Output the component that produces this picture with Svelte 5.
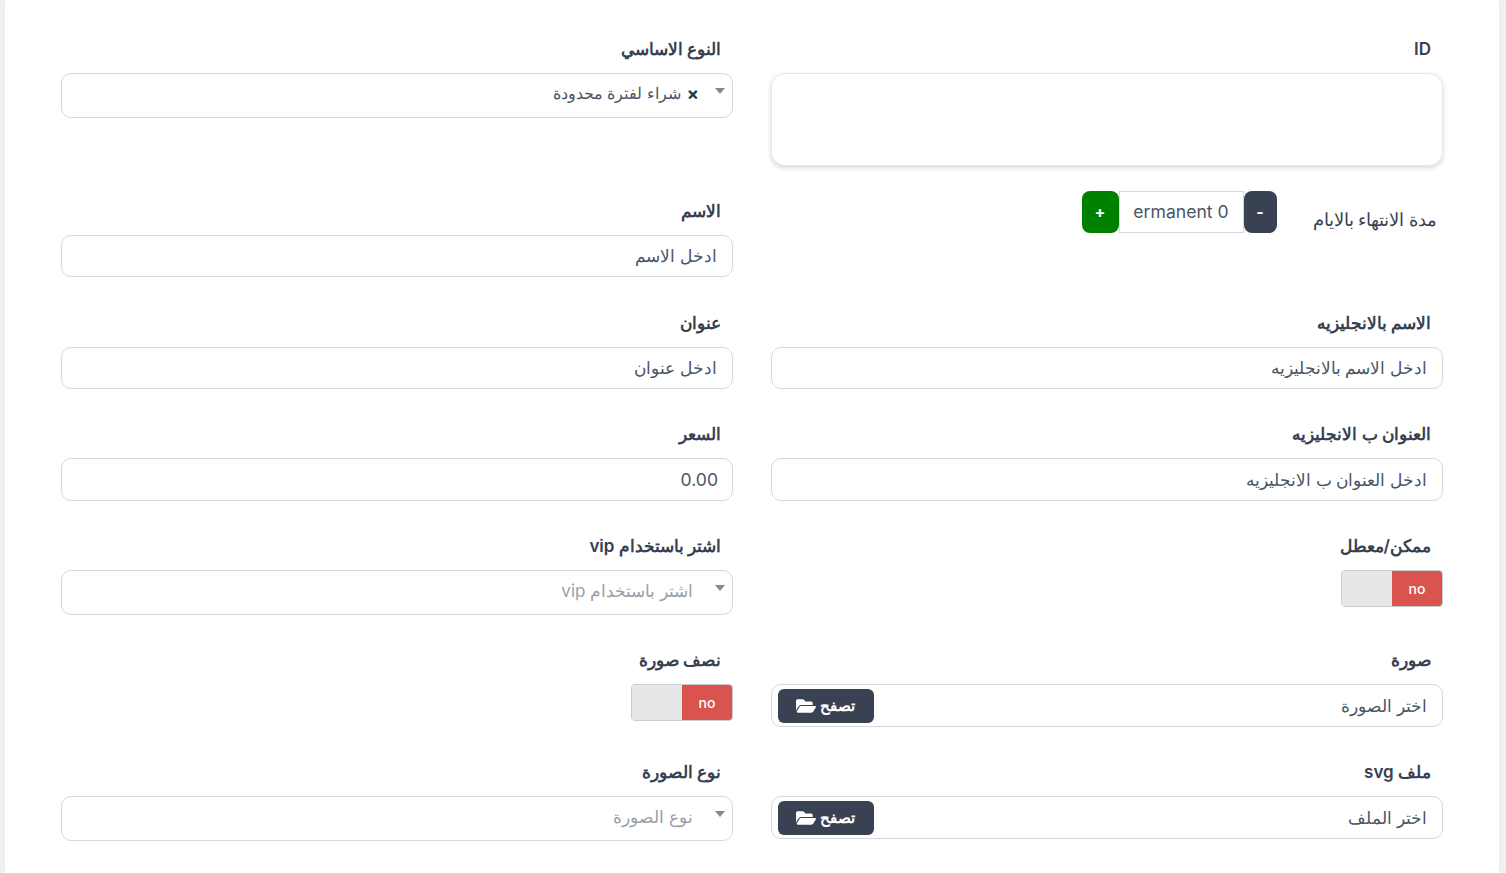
<script>
  const folder = 'M572.694 292.093L500.27 416.248A63.997 63.997 0 0 1 444.989 448H45.025c-18.523 0-30.064-20.093-20.731-36.093l72.424-124.155A64 64 0 0 1 152 256h399.964c18.523 0 30.064 20.093 20.73 36.093zM152 224h328v-48c0-26.51-21.49-48-48-48H272l-64-64H48C21.49 64 0 85.49 0 112v278.046l69.077-118.418C86.214 242.25 117.989 224 152 224z'
</script>

{#snippet browse(placeholder)}
  <div class="file-box">
    <span class="file-name">{placeholder}</span>
    <button type="button" class="browse">
      تصفح
      <svg viewBox="0 0 576 512" width="20" height="18" aria-hidden="true"><path d={folder} fill="currentColor" /></svg>
    </button>
  </div>
{/snippet}

{#snippet toggle()}
  <div class="toggle">
    <span class="toggle-no">no</span>
    <span class="toggle-off"></span>
  </div>
{/snippet}

{#snippet select(text, clearable)}
  <div class="select">
    <span class="arrow"></span>
    {#if clearable}
      <span class="clear">×</span>
      <span class="select-value">{text}</span>
    {:else}
      <span class="select-hint">{text}</span>
    {/if}
  </div>
{/snippet}

<div class="card">
  <form class="form">
    <div class="field first">
      <label for="id">ID</label>
      <textarea id="id" class="area"></textarea>
    </div>
    <div class="field first">
      <span class="label">النوع الاساسي</span>
      {@render select('شراء لفترة محدودة', true)}
    </div>

    <div class="field expire">
      <span class="expire-label">مدة الانتهاء بالايام</span>
      <div class="stepper">
        <button type="button" class="step minus">-</button>
        <span class="step-value">ermanent 0</span>
        <button type="button" class="step plus">+</button>
      </div>
    </div>
    <div class="field shifted">
      <label for="name">الاسم</label>
      <input id="name" class="input" placeholder="ادخل الاسم" />
    </div>

    <div class="field">
      <label for="name-en">الاسم بالانجليزيه</label>
      <input id="name-en" class="input" placeholder="ادخل الاسم بالانجليزيه" />
    </div>
    <div class="field">
      <label for="title">عنوان</label>
      <input id="title" class="input" placeholder="ادخل عنوان" />
    </div>

    <div class="field">
      <label for="title-en">العنوان ب الانجليزيه</label>
      <input id="title-en" class="input tall" placeholder="ادخل العنوان ب الانجليزيه" />
    </div>
    <div class="field">
      <label for="price">السعر</label>
      <input id="price" class="input tall number" placeholder="0.00" />
    </div>

    <div class="field">
      <span class="label">ممكن/معطل</span>
      {@render toggle()}
    </div>
    <div class="field">
      <span class="label">اشتر باستخدام vip</span>
      {@render select('اشتر باستخدام vip', false)}
    </div>

    <div class="field">
      <span class="label">صورة</span>
      {@render browse('اختر الصورة')}
    </div>
    <div class="field">
      <span class="label">نصف صورة</span>
      {@render toggle()}
    </div>

    <div class="field">
      <span class="label">ملف svg</span>
      {@render browse('اختر الملف')}
    </div>
    <div class="field">
      <span class="label">نوع الصورة</span>
      {@render select('نوع الصورة', false)}
    </div>
  </form>
</div>

<style>
  :global(body) {
    margin: 0;
    height: 873px;
    overflow: hidden;
    background: #f1f2f6;
    font-family: Inter, "Noto Sans", sans-serif;
    color: #374151;
  }

  .card {
    box-sizing: border-box;
    width: 1494px;
    height: 873px;
    margin-left: 5px;
    padding: 37px 56px 0;
    background: #fff;
    box-shadow: 0 0 6px rgba(0, 0, 0, 0.04);
  }

  .form {
    direction: rtl;
    display: grid;
    grid-template-columns: 672px 672px;
    column-gap: 38px;
    align-items: start;
  }

  .field {
    padding-bottom: 33px;
  }
  .field.first {
    padding-bottom: 25px;
  }
  .field.shifted {
    padding-top: 8px;
    padding-bottom: 34px;
  }

  label, .label {
    display: block;
    height: 24px;
    margin-bottom: 12px;
    padding-right: 12px;
    font-size: 17px;
    font-weight: 600;
    line-height: 24px;
    color: #374151;
  }

  .input, .file-box, .select {
    box-sizing: border-box;
    width: 100%;
    background: #fff;
    border: 1px solid #d5d8e0;
    border-radius: 10px;
    font-family: inherit;
    font-size: 16.8px;
    color: #4b5563;
  }

  .input {
    display: block;
    height: 42px;
    padding: 0 15px;
    outline: none;
  }
  .input.tall {
    height: 43px;
  }
  .input.number {
    padding-right: 14px;
    font-size: 17.6px;
  }
  .input::placeholder {
    color: #4b5563;
    opacity: 1;
  }

  .area {
    display: block;
    box-sizing: border-box;
    width: 100%;
    height: 93px;
    border: 1px solid #e6e8ee;
    border-radius: 14px;
    box-shadow: 0 2px 5px rgba(0, 0, 0, 0.16);
    resize: none;
    outline: none;
  }

  .select {
    display: flex;
    align-items: center;
    height: 45px;
    padding: 0 7px 4px 40px;
  }
  .arrow {
    width: 0;
    height: 0;
    margin-left: 13px;
    margin-bottom: 5px;
    border-left: 5px solid transparent;
    border-right: 5px solid transparent;
    border-top: 6px solid #888;
  }
  .clear {
    margin-left: 6px;
    margin-right: 3px;
    font-size: 18px;
    font-weight: 700;
    color: #333;
  }
  .select-value {
    font-size: 16.2px;
    margin-bottom: 2px;
  }
  .select-hint {
    margin-right: 9px;
    font-size: 17px;
    color: #9a9ea6;
  }

  .expire {
    display: flex;
    align-items: flex-start;
    padding-right: 6px;
    padding-bottom: 0;
  }
  .expire-label {
    margin-top: 17px;
    margin-left: 36px;
    font-size: 17.8px;
    font-weight: 500;
    line-height: 24px;
  }
  .stepper {
    display: flex;
    height: 42px;
  }
  .step {
    width: 33px;
    border: none;
    border-radius: 8px;
    color: #fff;
    font-family: inherit;
    font-size: 16px;
    font-weight: 700;
    padding: 0;
  }
  .minus {
    background: #394253;
  }
  .plus {
    width: 37px;
    background: #008000;
  }
  .step-value {
    box-sizing: border-box;
    width: 125px;
    border: 1px solid #d5d8e0;
    direction: ltr;
    text-align: center;
    font-size: 17.6px;
    line-height: 40px;
    color: #4b5563;
  }

  .toggle {
    display: flex;
    box-sizing: border-box;
    width: 102px;
    height: 37px;
    overflow: hidden;
    border: 1px solid #ccc;
    border-radius: 4px;
  }
  .toggle-no {
    flex: 1;
    background: #d9534f;
    color: #fff;
    font-size: 14px;
    font-weight: 500;
    line-height: 35px;
    text-align: center;
  }
  .toggle-off {
    flex: 1;
    background: #e6e7e9;
  }

  .file-box {
    display: flex;
    align-items: center;
    justify-content: space-between;
    height: 43px;
    padding: 0 15px 0 6px;
  }
  .browse {
    display: flex;
    align-items: center;
    justify-content: center;
    gap: 4px;
    width: 96px;
    height: 34px;
    padding: 0 2px 0 0;
    border: none;
    border-radius: 6px;
    background: #394253;
    color: #fff;
    font-family: inherit;
    font-size: 15.4px;
    font-weight: 600;
  }
</style>
